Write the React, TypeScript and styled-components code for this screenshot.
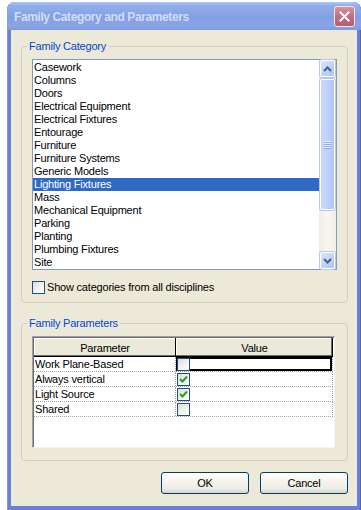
import React from 'react';
import styled, { createGlobalStyle } from 'styled-components';

const GlobalStyle = createGlobalStyle`
  html, body {
    margin: 0;
    padding: 0;
    background: #ffffff;
  }
  body {
    font-family: "Liberation Sans", Arial, sans-serif;
    font-size: 11px;
    letter-spacing: -0.2px;
    color: #000;
  }
`;

const categories = [
  'Casework',
  'Columns',
  'Doors',
  'Electrical Equipment',
  'Electrical Fixtures',
  'Entourage',
  'Furniture',
  'Furniture Systems',
  'Generic Models',
  'Lighting Fixtures',
  'Mass',
  'Mechanical Equipment',
  'Parking',
  'Planting',
  'Plumbing Fixtures',
  'Site',
];

const params = [
  { name: 'Work Plane-Based', checked: false },
  { name: 'Always vertical', checked: true },
  { name: 'Light Source', checked: true },
  { name: 'Shared', checked: false },
];

const Window = styled.div`
  margin: 2px 0 0 7px;
  width: 354px;
  height: 508px;
  display: flex;
  flex-direction: column;
  background: #6b7fd8;
  border-radius: 8px 8px 0 0;
  overflow: hidden;
  box-shadow: inset -1px 0 0 #5062c8, inset 1px 0 0 #8596e0;
`;

const TitleBar = styled.div`
  height: 28px;
  flex: none;
  display: flex;
  align-items: center;
  justify-content: space-between;
  padding: 0 6px 0 7px;
  background: linear-gradient(180deg, #b4c8f4 0%, #93aeeb 12%, #829fe4 55%, #8aa6e7 85%, #7f99e0 100%);
`;

const Title = styled.span`
  font-family: "Liberation Sans", Arial, sans-serif;
  font-weight: bold;
  font-size: 12px;
  letter-spacing: -0.4px;
  color: #d2ddf6;
  padding-top: 1px;
`;

const CloseButton = styled.div`
  width: 21px;
  height: 21px;
  box-sizing: border-box;
  border: 1px solid #f2e4ea;
  border-radius: 3px;
  background: linear-gradient(180deg, #d8929f 0%, #c47282 45%, #b45e6e 100%);
  display: flex;
  align-items: center;
  justify-content: center;
`;

const Body = styled.div`
  flex: 1;
  margin: 0 4px 4px;
  background: #ece9d8;
  padding: 10px 9px 11px 10px;
  display: flex;
  flex-direction: column;
`;

const Group = styled.fieldset<{ $top?: number; $bottom: number }>`
  margin: ${(p) => p.$top ?? 0}px 0 0 0;
  padding: 6px 10px ${(p) => p.$bottom}px 10px;
  border: 1px solid #d0d0bf;
  border-radius: 4px;
  min-width: 0;
`;

const Legend = styled.legend`
  padding: 0 2px;
  margin-left: -5px;
  color: #0046d5;
  font-size: 11px;
  line-height: 13px;
`;

const ListBox = styled.div`
  height: 211px;
  box-sizing: border-box;
  border: 1px solid #7f9db9;
  background: #fff;
  display: flex;
`;

const Items = styled.div`
  flex: 1;
  padding-top: 1px;
  overflow: hidden;
`;

const Item = styled.div<{ $selected?: boolean }>`
  height: 13px;
  line-height: 13px;
  padding-left: 1px;
  white-space: nowrap;
  background: ${(p) => (p.$selected ? '#316ac5' : 'transparent')};
  color: ${(p) => (p.$selected ? '#fff' : '#000')};
`;

const ScrollBar = styled.div`
  width: 17px;
  flex: none;
  display: flex;
  flex-direction: column;
  background: linear-gradient(90deg, #eeede5 0%, #f7f6f2 50%, #f1efe8 100%);
`;

const ScrollButton = styled.div`
  height: 17px;
  box-sizing: border-box;
  margin: 0 1px;
  border: 1px solid #fff;
  border-radius: 2px;
  box-shadow: 0 0 0 1px #b4c7f3;
  background: linear-gradient(135deg, #dbe6fe 0%, #bdd0fb 60%, #aec4f7 100%);
  display: flex;
  align-items: center;
  justify-content: center;
  flex: none;
`;

const Track = styled.div`
  flex: 1;
  padding: 2px 0;
  display: flex;
  flex-direction: column;
`;

const Thumb = styled.div`
  height: 131px;
  box-sizing: border-box;
  margin: 0 1px;
  border: 1px solid #fff;
  border-radius: 2px;
  box-shadow: 0 0 0 1px #b4c7f3;
  background: linear-gradient(90deg, #c9d8fc 0%, #bccffb 60%, #b0c5f7 100%);
  display: flex;
  align-items: center;
  justify-content: center;
`;

const Grip = styled.div`
  width: 7px;
  height: 8px;
  background: repeating-linear-gradient(180deg, #eef3fe 0 1px, #8ea8e6 1px 2px);
`;

const CheckRow = styled.label`
  margin-top: 11px;
  display: flex;
  align-items: center;
  gap: 2px;
  height: 13px;
  line-height: 13px;
`;

const CheckBox = styled.span`
  width: 13px;
  height: 13px;
  flex: none;
  box-sizing: border-box;
  border: 1px solid #1c5180;
  background: linear-gradient(135deg, #dcdcd6 0%, #f0f0ea 45%, #ffffff 100%);
  display: inline-flex;
  align-items: center;
  justify-content: center;
`;

const Grid = styled.div`
  height: 112px;
  margin-right: 2px;
  box-sizing: border-box;
  border: 1px solid;
  border-color: #a0a0a0 #f4f4f0 #f4f4f0 #a0a0a0;
  box-shadow: inset 1px 1px 0 #6f6f6f;
  background: #fff;
  padding: 1px 0 0 1px;
  display: flex;
  flex-direction: column;
`;

const GridRow = styled.div<{ $header?: boolean }>`
  display: grid;
  grid-template-columns: 142px 1fr;
  height: ${(p) => (p.$header ? 19 : 15)}px;
  box-sizing: border-box;
  margin-right: 1px;
  border-bottom: ${(p) => (p.$header ? 'none' : '1px dotted #a5a5a5')};
  border-right: ${(p) => (p.$header ? 'none' : '1px dotted #a5a5a5')};
`;

const HeaderCell = styled.div<{ $last?: boolean }>`
  background: #ece9d8;
  display: flex;
  align-items: center;
  justify-content: center;
  box-shadow: inset -1px -1px 0 #000, inset ${(p) => (p.$last ? '-2px -2px' : '0 -2px')} 0 #716f64,
    inset 1px 1px 0 #fff;
`;

const NameCell = styled.div`
  padding-left: 1px;
  line-height: 14px;
  border-right: 1px dotted #a5a5a5;
  white-space: nowrap;
`;

const ValueCell = styled.div<{ $current?: boolean }>`
  display: flex;
  align-items: center;
  padding-left: 1px;
  box-shadow: ${(p) => (p.$current ? 'inset 0 0 0 2px #000' : 'none')};
`;

const Buttons = styled.div`
  margin-top: 11px;
  display: flex;
  justify-content: flex-end;
  gap: 11px;
`;

const Button = styled.button`
  width: 88px;
  height: 22px;
  border: 1px solid #003c74;
  border-radius: 3px;
  background: linear-gradient(180deg, #ffffff 0%, #f5f4ef 40%, #ecebe5 80%, #d8d2c6 100%);
  font-family: "Liberation Sans", Arial, sans-serif;
  font-size: 11px;
  letter-spacing: -0.2px;
  color: #000;
  padding: 0;
`;

const Chevron = ({ up }: { up?: boolean }) => (
  <svg width="9" height="6" viewBox="0 0 9 6">
    <path
      d={up ? 'M1 5L4.5 1.5L8 5' : 'M1 1L4.5 4.5L8 1'}
      stroke="#4d6185"
      strokeWidth={2}
      fill="none"
    />
  </svg>
);

const Check = () => (
  <svg width="9" height="8" viewBox="0 0 9 8">
    <path d="M1 4L3.5 6.5L8 1.5" stroke="#21a121" strokeWidth={2} fill="none" />
  </svg>
);

const CloseX = () => (
  <svg width="11" height="11" viewBox="0 0 11 11">
    <path d="M1.5 1.5L9.5 9.5M9.5 1.5L1.5 9.5" stroke="#fff" strokeWidth={2} strokeLinecap="square" />
  </svg>
);

export default function App() {
  return (
    <>
      <GlobalStyle />
      <Window>
        <TitleBar>
          <Title>Family Category and Parameters</Title>
          <CloseButton>
            <CloseX />
          </CloseButton>
        </TitleBar>
        <Body>
          <Group $bottom={8}>
            <Legend>Family Category</Legend>
            <ListBox>
              <Items>
                {categories.map((c) => (
                  <Item key={c} $selected={c === 'Lighting Fixtures'}>
                    {c}
                  </Item>
                ))}
              </Items>
              <ScrollBar>
                <ScrollButton>
                  <Chevron up />
                </ScrollButton>
                <Track>
                  <Thumb>
                    <Grip />
                  </Thumb>
                </Track>
                <ScrollButton>
                  <Chevron />
                </ScrollButton>
              </ScrollBar>
            </ListBox>
            <CheckRow>
              <CheckBox />
              <span>Show categories from all disciplines</span>
            </CheckRow>
          </Group>

          <Group $top={14} $bottom={12}>
            <Legend>Family Parameters</Legend>
            <Grid>
              <GridRow $header>
                <HeaderCell>Parameter</HeaderCell>
                <HeaderCell $last>Value</HeaderCell>
              </GridRow>
              {params.map((p, i) => (
                <GridRow key={p.name}>
                  <NameCell>{p.name}</NameCell>
                  <ValueCell $current={i === 0}>
                    <CheckBox>{p.checked && <Check />}</CheckBox>
                  </ValueCell>
                </GridRow>
              ))}
            </Grid>
          </Group>

          <Buttons>
            <Button>OK</Button>
            <Button>Cancel</Button>
          </Buttons>
        </Body>
      </Window>
    </>
  );
}
